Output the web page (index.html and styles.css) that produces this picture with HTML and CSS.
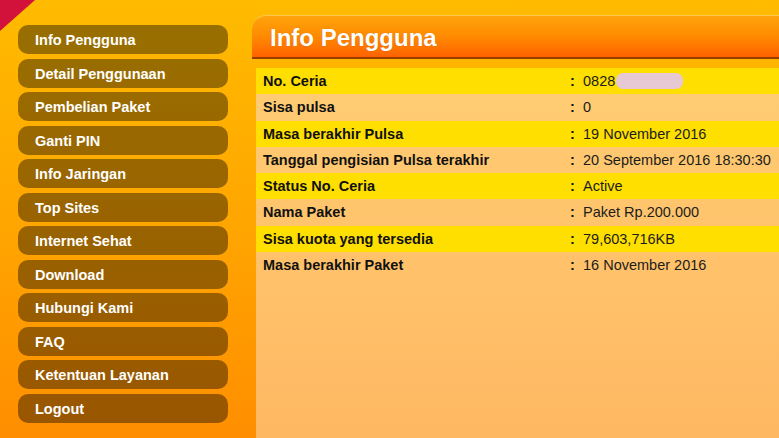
FILE: index.html
```html
<!DOCTYPE html>
<html>
<head>
<meta charset="utf-8">
<link rel="stylesheet" href="styles.css">
</head>
<body>
<div class="page">
  <svg class="corner" width="36" height="32" viewBox="0 0 36 32"><polygon points="0,0 35,0 0,31" fill="#d3123c"/></svg>
  <nav class="sidebar">
    <a class="menu-item">Info Pengguna</a>
    <a class="menu-item">Detail Penggunaan</a>
    <a class="menu-item">Pembelian Paket</a>
    <a class="menu-item">Ganti PIN</a>
    <a class="menu-item">Info Jaringan</a>
    <a class="menu-item">Top Sites</a>
    <a class="menu-item">Internet Sehat</a>
    <a class="menu-item">Download</a>
    <a class="menu-item">Hubungi Kami</a>
    <a class="menu-item">FAQ</a>
    <a class="menu-item">Ketentuan Layanan</a>
    <a class="menu-item">Logout</a>
  </nav>
  <main class="main">
    <h1 class="title">Info Pengguna</h1>
    <div class="panel">
      <div class="row hl"><span class="label">No. Ceria</span><span class="value">0828<span class="redact"></span></span></div>
      <div class="row"><span class="label">Sisa pulsa</span><span class="value">0</span></div>
      <div class="row hl"><span class="label">Masa berakhir Pulsa</span><span class="value">19 November 2016</span></div>
      <div class="row"><span class="label">Tanggal pengisian Pulsa terakhir</span><span class="value">20 September 2016 18:30:30</span></div>
      <div class="row hl"><span class="label">Status No. Ceria</span><span class="value">Active</span></div>
      <div class="row"><span class="label">Nama Paket</span><span class="value">Paket Rp.200.000</span></div>
      <div class="row hl"><span class="label">Sisa kuota yang tersedia</span><span class="value">79,603,716KB</span></div>
      <div class="row"><span class="label">Masa berakhir Paket</span><span class="value">16 November 2016</span></div>
    </div>
  </main>
</div>
</body>
</html>
```

FILE: styles.css
```css
html, body {
  margin: 0;
  padding: 0;
  height: 100%;
  overflow: hidden;
}
body {
  font-family: "Liberation Sans", Arial, sans-serif;
}
.page {
  position: relative;
  display: flex;
  height: 438px;
  background: linear-gradient(to bottom, #ffbb00 0%, #ffa600 50%, #ff8e00 100%);
}
.corner {
  position: absolute;
  left: 0;
  top: 0;
}
.sidebar {
  width: 252px;
  flex: none;
  padding: 25px 0 0 18px;
  box-sizing: border-box;
  display: flex;
  flex-direction: column;
  gap: 4.55px;
}
.menu-item {
  display: block;
  width: 210px;
  height: 29px;
  line-height: 30px;
  padding-left: 17px;
  box-sizing: border-box;
  border-radius: 10px;
  background: rgba(0, 0, 0, 0.4);
  color: #ffffff;
  font-weight: bold;
  font-size: 14.5px;
}
.main {
  flex: 1;
  display: flex;
  flex-direction: column;
  padding-top: 15px;
  min-width: 0;
}
.title {
  margin: 0;
  height: 41px;
  line-height: 44px;
  padding-left: 18px;
  font-size: 24px;
  font-weight: bold;
  color: #ffffff;
  border-top-left-radius: 14px;
  border-top: 1px solid #ffc850;
  border-bottom: 2px solid #9a3e00;
  background: linear-gradient(to bottom, #ffa40c 0%, #ff8a00 50%, #ff6200 100%);
  text-shadow: 0 0 1px rgba(120, 40, 0, 0.4);
}
.panel {
  flex: 1;
  margin-top: 9px;
  margin-left: 4px;
  background: linear-gradient(to bottom, #ffcd74 0%, #ffb862 100%);
}
.row {
  display: flex;
  height: 26.25px;
  align-items: center;
  font-size: 14.5px;
}
.row.hl {
  background: #ffdf00;
}
.label {
  width: 314px;
  flex: none;
  padding-left: 7px;
  box-sizing: border-box;
  font-weight: bold;
  color: #111111;
}
.value {
  color: #1c1c1c;
  display: flex;
  align-items: center;
}
.value::before {
  content: ":";
  font-weight: bold;
  width: 13px;
  color: #111111;
}
.redact {
  display: inline-block;
  width: 67px;
  height: 16px;
  border-radius: 7px;
  background: #e6c9d4;
  margin-left: 1px;
}
```
